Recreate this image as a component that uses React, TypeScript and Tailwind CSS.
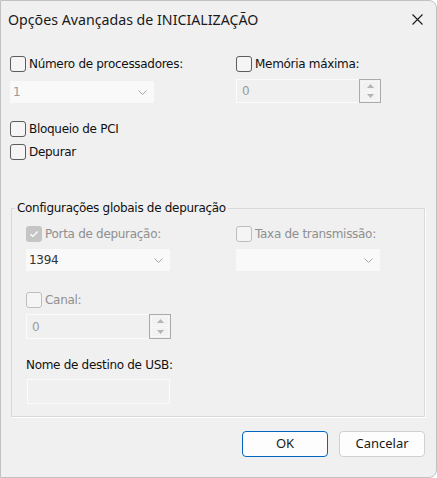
import React from "react";

const body = { fontFamily: '"DejaVu Sans", Tahoma, sans-serif' };

function Box({ state }: { state: "on" | "off" | "disabledOff" | "disabledOn" }) {
  if (state === "disabledOn") {
    return (
      <span className="w-[16px] h-[16px] rounded-[3px] bg-[#c5c5c5] flex items-center justify-center shrink-0">
        <svg width="10" height="8" viewBox="0 0 10 8">
          <path d="M1.5 4.2 L4 6.5 L8.6 1.5" fill="none" stroke="#ffffff" strokeWidth="1.2" />
        </svg>
      </span>
    );
  }
  const border = state === "disabledOff" ? "border-[#bdbdbd]" : "border-[#5c5c5c]";
  return <span className={`w-[16px] h-[16px] rounded-[3px] border ${border} bg-[#f5f5f5] shrink-0`} />;
}

function Check({ label, state, disabled }: { label: string; state: "on" | "off" | "disabledOff" | "disabledOn"; disabled?: boolean }) {
  return (
    <div className="flex items-center h-[16px]">
      <Box state={state} />
      <span className={`ml-[3px] text-[12px] leading-[16px] tracking-[-0.3px] ${disabled ? "text-[#8f8f8f]" : "text-[#111111]"}`}>{label}</span>
    </div>
  );
}

function Chevron() {
  return (
    <svg width="9" height="5" viewBox="0 0 9 5">
      <path d="M0.5 0.5 L4.5 4.5 L8.5 0.5" fill="none" stroke="#a6a6a6" strokeWidth="1" />
    </svg>
  );
}

function Combo({ value, dark, w }: { value: string; dark?: boolean; w: string }) {
  return (
    <div className={`${w} h-[22px] bg-[#f9f9f9] flex items-center justify-between pl-[3px] pr-[7px]`}>
      <span className={`text-[12px] tracking-[-0.3px] ${dark ? "text-[#333333]" : "text-[#9a9a9a]"}`}>{value}</span>
      <Chevron />
    </div>
  );
}

function Spinner({ w, h }: { w: string; h: string }) {
  return (
    <div className={`${w} ${h} flex`}>
      <div className="flex-1 border border-[#fbfbfb] border-r-0 flex items-center pl-[5px]">
        <span className="text-[12px] text-[#9a9a9a]">0</span>
      </div>
      <div className="w-[22px] border border-[#ababab] flex flex-col p-[1px] gap-[1px]">
        <div className="flex-1 bg-[#f2f2f2] border border-[#f8f8f8] flex items-center justify-center">
          <svg width="7" height="4" viewBox="0 0 7 4"><path d="M0 4 L3.5 0 L7 4 Z" fill="#b4b4b4" /></svg>
        </div>
        <div className="flex-1 bg-[#f2f2f2] border border-[#f8f8f8] flex items-center justify-center">
          <svg width="7" height="4" viewBox="0 0 7 4"><path d="M0 0 L3.5 4 L7 0 Z" fill="#b4b4b4" /></svg>
        </div>
      </div>
    </div>
  );
}

export default function App() {
  return (
    <div className="w-[437px] h-[478px] bg-[#f0f0f0] border border-[#c2c2c2] rounded-tr-[8px] rounded-br-[8px] flex flex-col overflow-hidden" style={body}>
      <div className="h-[37px] flex items-center justify-between pl-[7px] pr-[13px]">
        <span className="text-[14.2px] text-[#1a1a1a]" style={{ fontFamily: '"Noto Sans", "Open Sans", sans-serif' }}>
          Opções Avançadas de INICIALIZAÇÃO
        </span>
        <svg width="11" height="11" viewBox="0 0 11 11">
          <path d="M0.5 0.5 L10.5 10.5 M10.5 0.5 L0.5 10.5" stroke="#1a1a1a" strokeWidth="1.1" />
        </svg>
      </div>

      <div className="pl-[9px] flex flex-col">
        <div className="mt-[18px] grid grid-cols-[226px_1fr]">
          <div className="flex flex-col">
            <Check label="Número de processadores:" state="off" />
            <div className="mt-[9px]">
              <Combo value="1" w="w-[144px]" />
            </div>
          </div>
          <div className="flex flex-col">
            <Check label="Memória máxima:" state="off" />
            <div className="mt-[7px]">
              <Spinner w="w-[145px]" h="h-[24px]" />
            </div>
          </div>
        </div>

        <div className="mt-[18px]">
          <Check label="Bloqueio de PCI" state="off" />
        </div>
        <div className="mt-[7px]">
          <Check label="Depurar" state="off" />
        </div>

        <div className="relative mt-[48px] ml-[1px] w-[414px] h-[209px] border border-[#d9d9d9] shadow-[1px_1px_0_#ffffff]">
          <span className="absolute left-[3px] top-[-9px] px-[2px] bg-[#f0f0f0] text-[12px] leading-[16px] tracking-[-0.3px] text-[#111111]">
            Configurações globais de depuração
          </span>
          <div className="pl-[14px] pt-[17px] flex flex-col">
            <div className="grid grid-cols-[210px_1fr]">
              <div className="flex flex-col">
                <Check label="Porta de depuração:" state="disabledOn" disabled />
                <div className="mt-[7px]">
                  <Combo value="1394" dark w="w-[144px]" />
                </div>
              </div>
              <div className="flex flex-col">
                <Check label="Taxa de transmissão:" state="disabledOff" disabled />
                <div className="mt-[7px]">
                  <Combo value="" w="w-[144px]" />
                </div>
              </div>
            </div>
            <div className="mt-[21px]">
              <Check label="Canal:" state="disabledOff" disabled />
            </div>
            <div className="mt-[6px]">
              <Spinner w="w-[145px]" h="h-[25px]" />
            </div>
            <div className="mt-[18px] h-[16px] flex items-center">
              <span className="text-[12px] tracking-[-0.3px] text-[#111111]">Nome de destino de USB:</span>
            </div>
            <div className="mt-[6px] ml-[1px] w-[143px] h-[25px] border border-[#fbfbfb]" />
          </div>
        </div>
      </div>

      <div className="mt-[14px] flex justify-end gap-[11px] pr-[11px]" style={{ fontFamily: '"Noto Sans", "Open Sans", sans-serif' }}>
        <button className="w-[86px] h-[26px] rounded-[4px] border border-[#0067c0] bg-[#fdfdfd] text-[13px] text-[#1a1a1a]">OK</button>
        <button className="w-[86px] h-[26px] rounded-[4px] border border-[#d0d0d0] bg-[#fdfdfd] text-[13px] text-[#1a1a1a]">Cancelar</button>
      </div>
    </div>
  );
}
